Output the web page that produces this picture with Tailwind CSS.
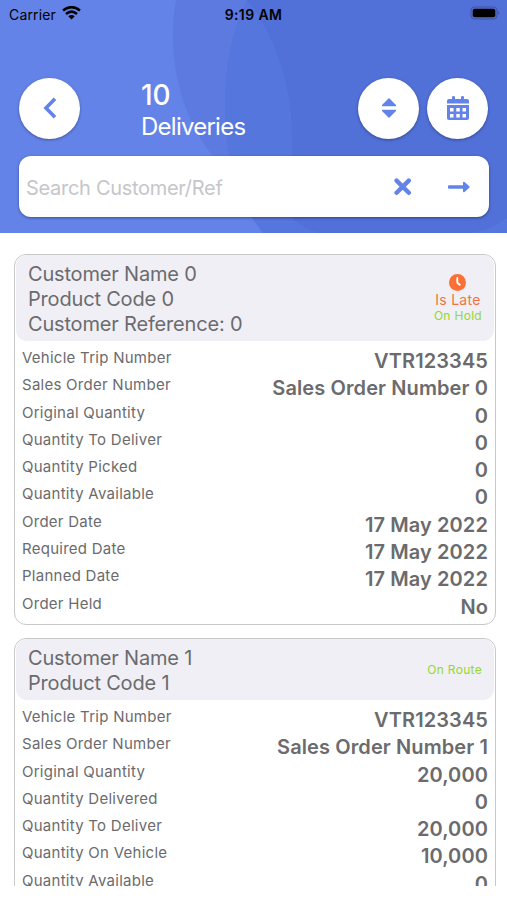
<!DOCTYPE html>
<html lang="en">
<head>
    <meta charset="UTF-8">
    <meta name="viewport" content="width=device-width, initial-scale=1.0">
    <title>Deliveries</title>
    <script src="https://cdn.jsdelivr.net/npm/@tailwindcss/browser@4"></script>
</head>
<body class="bg-white font-['Inter','Liberation_Sans',sans-serif] text-[#6b6b6d]">

    <div class="h-[886px] overflow-hidden">

        <!-- Header -->
        <header class="relative h-[233px] overflow-hidden bg-[#6483e9]">
            <svg class="absolute inset-0" width="507" height="233" viewBox="0 0 507 233">
                <path d="M176 0C166 58 181 115 212 155L262 233H507V0Z" fill="#5d7ae0" />
                <path d="M247 0C226 40 221 95 228 150C234 185 245 212 264 233H507V0Z" fill="#5576dc" />
                <path d="M247 0C275 35 292 85 292 135V218C300 225 309 230 320 233H470Q490 230 507 218V0Z" fill="#5170d8" />
            </svg>

            <div class="relative">
                <!-- Status bar -->
                <div class="flex h-[28px] items-center justify-between pl-[9px] pr-[7px] text-black">
                    <div class="flex w-[160px] items-center gap-[6px]">
                        <span class="text-[14px] tracking-[0.15px]">Carrier</span>
                        <svg class="-mt-[2px]" width="19" height="14" viewBox="0 0 19 14" fill="none" stroke="#000" stroke-width="2.6">
                            <path d="M1 4.6Q9.500-2.400 18 4.600" />
                            <path d="M4 8Q9.500 3.400 15 8" />
                            <path d="M9.500 13.500L6.300 10.300Q9.500 7.800 12.700 10.300Z" fill="#000" stroke="none" />
                        </svg>
                    </div>
                    <span class="-ml-[2px] text-[14px] font-semibold tracking-[0.4px]">9:19 AM</span>
                    <div class="flex w-[160px] justify-end">
                        <svg class="-mt-[2px]" width="30" height="14" viewBox="0 0 30 14">
                            <rect x="1" y="1" width="26" height="12" rx="3.500" fill="none" stroke="#3e539f" />
                            <rect x="2.700" y="2.700" width="22.600" height="8.600" rx="2" fill="#000" />
                            <path d="M28.300 5V9Q30.300 7 28.300 5Z" fill="#3e539f" />
                        </svg>
                    </div>
                </div>

                <!-- Title and actions -->
                <div class="mt-[49px] flex h-[62px] items-center pl-[19px] pr-[18px]">
                    <button class="flex size-[61px] items-center justify-center rounded-full bg-white shadow-[0_1px_3px_rgba(0,0,0,0.35)]">
                        <svg width="14" height="22" viewBox="0 0 14 22" fill="none" stroke="#6483e9" stroke-width="3.600" stroke-linecap="butt" stroke-linejoin="miter">
                            <path d="M12 1.800L3 11L12 20.200" />
                        </svg>
                    </button>
                    <h1 class="ml-[61px] flex-1 pt-[5px] text-white">
                        <span class="block text-[28px] font-medium leading-[32px]">10</span>
                        <span class="block text-[24px] leading-[31px] tracking-[-0.75px]">Deliveries</span>
                    </h1>
                    <div class="mr-px flex gap-2">
                        <button class="flex size-[61px] items-center justify-center rounded-full bg-white shadow-[0_1px_3px_rgba(0,0,0,0.35)]">
                            <svg width="16" height="22" viewBox="0 0 16 22" fill="#6483e9">
                                <path d="M8 1L15 8V9.300H1V8Z" />
                                <path d="M1 12.700H15V14L8 21L1 14Z" />
                            </svg>
                        </button>
                        <button class="flex size-[61px] items-center justify-center rounded-full bg-white shadow-[0_1px_3px_rgba(0,0,0,0.35)]">
                            <svg width="22" height="24" viewBox="0 0 22 24">
                                <path d="M0 7.500V5Q0 3 2 3H5V1Q5 0 6.500 0T8 1V3H14V1Q14 0 15.500 0T17 1V3H20Q22 3 22 5V7.500Z" fill="#6483e9" />
                                <path d="M0 9H22V22Q22 24 20 24H2Q0 24 0 22Z" fill="#6483e9" />
                                <path d="M3 12H6.500V15.500H3ZM9.300 12H12.800V15.500H9.300ZM15.500 12H19V15.500H15.500ZM3 18H6.500V21.500H3ZM9.300 18H12.800V21.500H9.300ZM15.500 18H19V21.500H15.500Z" fill="#fff" />
                            </svg>
                        </button>
                    </div>
                </div>

                <!-- Search -->
                <div class="mx-[19px] mt-[17px] flex h-[61px] w-[470px] items-center rounded-[12px] bg-white shadow-[0_1px_3px_rgba(0,0,0,0.4)]">
                    <span class="flex-1 pl-[7px] pt-[2px] text-[20px] tracking-[-0.3px] text-[#c5c6c9]">Search Customer/Ref</span>
                    <svg class="mr-[36px]" width="18" height="18" viewBox="0 0 18 18" stroke="#6483e9" stroke-width="4.400" stroke-linecap="round">
                        <path d="M2.600 2.600L14.800 14.800M14.800 2.600L2.600 14.800" />
                    </svg>
                    <svg class="mr-[19px]" width="22" height="12" viewBox="0 0 22 12">
                        <path d="M1 4.300H15V1.500Q15.300 .2 16.500 1L21.300 5.300Q22 6 21.300 6.700L16.500 11Q15.300 11.800 15 10.500V7.700H1Q0 7.700 0 6.700V5.300Q0 4.300 1 4.300Z" fill="#6483e9" />
                    </svg>
                </div>
            </div>
        </header>

        <!-- Delivery list -->
        <main id="deliveries" class="flex flex-col gap-[13px] pl-[14px] pr-[11px] pt-[21px]"></main>
    </div>

    <script>
        const deliveries = [
            {
                title: ['Customer Name 0', 'Product Code 0', 'Customer Reference: 0'],
                late: true,
                status: 'On Hold',
                rows: [
                    ['Vehicle Trip Number', 'VTR123345'],
                    ['Sales Order Number', 'Sales Order Number 0'],
                    ['Original Quantity', '0'],
                    ['Quantity To Deliver', '0'],
                    ['Quantity Picked', '0'],
                    ['Quantity Available', '0'],
                    ['Order Date', '17 May 2022'],
                    ['Required Date', '17 May 2022'],
                    ['Planned Date', '17 May 2022'],
                    ['Order Held', 'No'],
                ],
            },
            {
                title: ['Customer Name 1', 'Product Code 1'],
                late: false,
                status: 'On Route',
                rows: [
                    ['Vehicle Trip Number', 'VTR123345'],
                    ['Sales Order Number', 'Sales Order Number 1'],
                    ['Original Quantity', '20,000'],
                    ['Quantity Delivered', '0'],
                    ['Quantity To Deliver', '20,000'],
                    ['Quantity On Vehicle', '10,000'],
                    ['Quantity Available', '0'],
                ],
            },
        ];

        const lateBadge = `
            <svg width="17" height="17" viewBox="0 0 17 17">
                <circle cx="8.500" cy="8.500" r="8.500" fill="#fa7035" />
                <path d="M8.300 4V8.800L10.800 10.800" fill="none" stroke="#fff" stroke-width="1.800" stroke-linecap="round" />
            </svg>
            <span class="text-[14px] leading-[17px] tracking-[0.3px] text-[#f4743f]">Is Late</span>`;

        document.getElementById('deliveries').innerHTML = deliveries.map(d => `
            <section class="rounded-[12px] border border-[#c8c8cb] pb-[7px]">
                <div class="mx-px flex items-center justify-between rounded-[11px] bg-[#f0eff6] pb-[4px] pl-[12px] pr-[12px] pt-[7px]">
                    <div class="text-[20px] leading-[25px] tracking-[-0.18px]">
                        ${d.title.map(t => `<p>${t}</p>`).join('')}
                    </div>
                    <div class="-mt-[2px] flex flex-col items-center">
                        ${d.late ? lateBadge : ''}
                        <span class="text-[12px] leading-[15px] tracking-[0.3px] text-[#94d82d]">${d.status}</span>
                    </div>
                </div>
                <dl class="pl-[7px] pr-[7px] pt-[3px]">
                    ${d.rows.map(([label, value]) => `
                        <div class="flex h-[27.300px] justify-between">
                            <dt class="text-[15px] leading-[27px] tracking-[0.26px]">${label}</dt>
                            <dd class="pt-[4px] text-[20px] font-semibold leading-[27px] tracking-[0.1px]">${value}</dd>
                        </div>`).join('')}
                </dl>
            </section>`).join('');
    </script>

</body>
</html>
